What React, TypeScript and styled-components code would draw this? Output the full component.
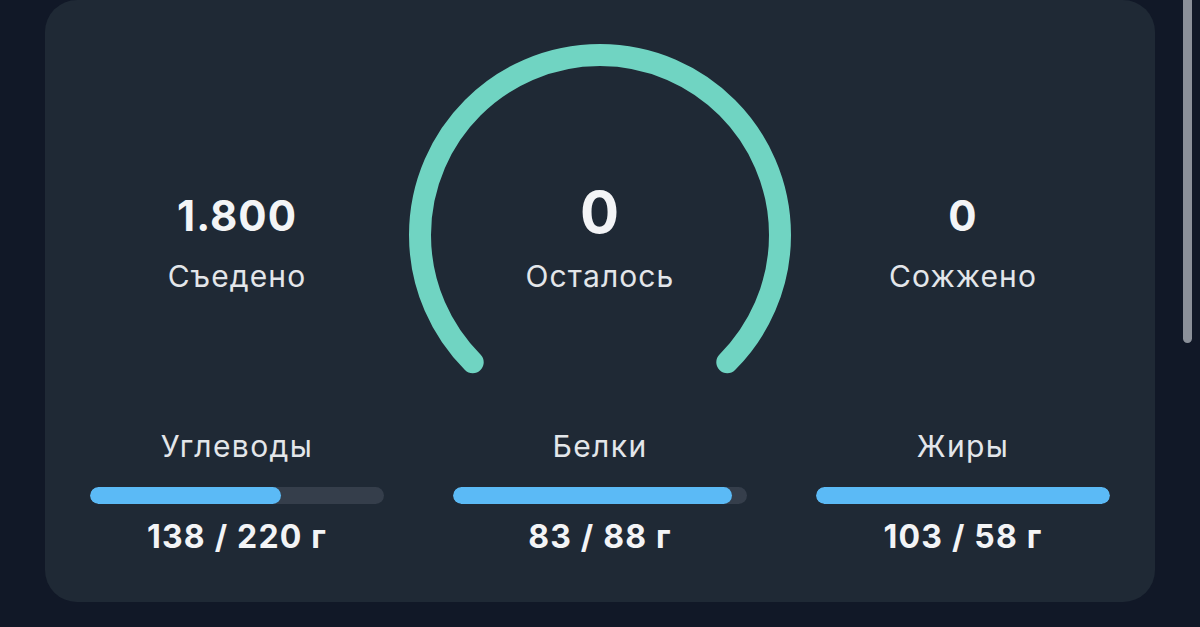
import React from 'react';
import styled, { createGlobalStyle } from 'styled-components';

const GlobalStyle = createGlobalStyle`
  html, body {
    margin: 0;
    padding: 0;
    background: #111827;
  }
  body {
    font-family: Inter, 'Noto Sans', sans-serif;
    color: #f3f4f6;
    overflow: hidden;
  }
`;

const Page = styled.div`
  position: relative;
  width: 1200px;
  height: 627px;
  background: #111827;
`;

const Card = styled.section`
  box-sizing: border-box;
  margin-left: 45px;
  width: 1110px;
  height: 602px;
  padding: 44px 45px 0;
  background: #1f2935;
  border-radius: 32px;
`;

const Row = styled.div<{ $height?: number; $top?: number }>`
  display: grid;
  grid-template-columns: repeat(3, 294px);
  column-gap: 69px;
  height: ${(p) => (p.$height ? `${p.$height}px` : 'auto')};
  margin-top: ${(p) => p.$top ?? 0}px;
`;

const Stat = styled.div<{ $offset: number }>`
  display: flex;
  flex-direction: column;
  align-items: center;
  margin-top: ${(p) => p.$offset}px;
`;

const Value = styled.div<{ $size: number }>`
  font-size: ${(p) => p.$size}px;
  line-height: 1;
  font-weight: 700;
  letter-spacing: 1px;
  color: #f3f4f6;
`;

const Caption = styled.div<{ $gap: number }>`
  margin-top: ${(p) => p.$gap}px;
  font-size: 30px;
  line-height: 1;
  font-weight: 400;
  letter-spacing: 1.1px;
  color: #e3e6ea;
`;

const GaugeCell = styled.div`
  display: grid;
  justify-self: center;
  width: 382px;
  height: 332px;
  > * {
    grid-area: 1 / 1;
  }
`;

const GaugeSvg = styled.svg`
  display: block;
`;

const Macro = styled.div`
  display: flex;
  flex-direction: column;
  align-items: center;
`;

const MacroName = styled.div`
  font-size: 30px;
  line-height: 1;
  letter-spacing: 1.4px;
  color: #e3e6ea;
`;

const Track = styled.div`
  margin-top: 26px;
  width: 100%;
  height: 17px;
  border-radius: 9px;
  background: #353e4b;
  overflow: hidden;
`;

const Fill = styled.div`
  height: 100%;
  border-radius: 9px;
  background: #5bbaf6;
`;

const MacroValue = styled.div`
  margin-top: 17px;
  font-size: 32px;
  line-height: 1;
  font-weight: 700;
  letter-spacing: 1.2px;
  color: #f3f4f6;
`;

const ScrollThumb = styled.div`
  position: absolute;
  top: 0;
  left: 1183px;
  width: 9px;
  height: 343px;
  border-radius: 0 0 5px 5px;
  background: #8b9099;
`;

const macros = [
  { name: 'Углеводы', eaten: 138, goal: 220, pct: 65 },
  { name: 'Белки', eaten: 83, goal: 88, pct: 95 },
  { name: 'Жиры', eaten: 103, goal: 58, pct: 100 },
];

const Gauge: React.FC = () => {
  const c = 191;
  const r = 180;
  const d = r * Math.SQRT1_2;
  return (
    <GaugeSvg width={382} height={332} viewBox="0 0 382 332">
      <path
        d={`M ${c - d} ${c + d} A ${r} ${r} 0 1 1 ${c + d} ${c + d}`}
        fill="none"
        stroke="#70d4c2"
        strokeWidth={22}
        strokeLinecap="round"
      />
    </GaugeSvg>
  );
};

const App: React.FC = () => {
  return (
    <Page>
      <GlobalStyle />
      <Card>
        <Row $height={332}>
          <Stat $offset={151}>
            <Value $size={42}>1.800</Value>
            <Caption $gap={24}>Съедено</Caption>
          </Stat>
          <GaugeCell>
            <Gauge />
            <Stat $offset={139}>
              <Value $size={58}>0</Value>
              <Caption $gap={20}>Осталось</Caption>
            </Stat>
          </GaugeCell>
          <Stat $offset={151}>
            <Value $size={42}>0</Value>
            <Caption $gap={24}>Сожжено</Caption>
          </Stat>
        </Row>
        <Row $top={55}>
          {macros.map((m) => (
            <Macro key={m.name}>
              <MacroName>{m.name}</MacroName>
              <Track>
                <Fill style={{ width: `${m.pct}%` }} />
              </Track>
              <MacroValue>
                {m.eaten} / {m.goal} г
              </MacroValue>
            </Macro>
          ))}
        </Row>
      </Card>
      <ScrollThumb />
    </Page>
  );
};

export default App;
